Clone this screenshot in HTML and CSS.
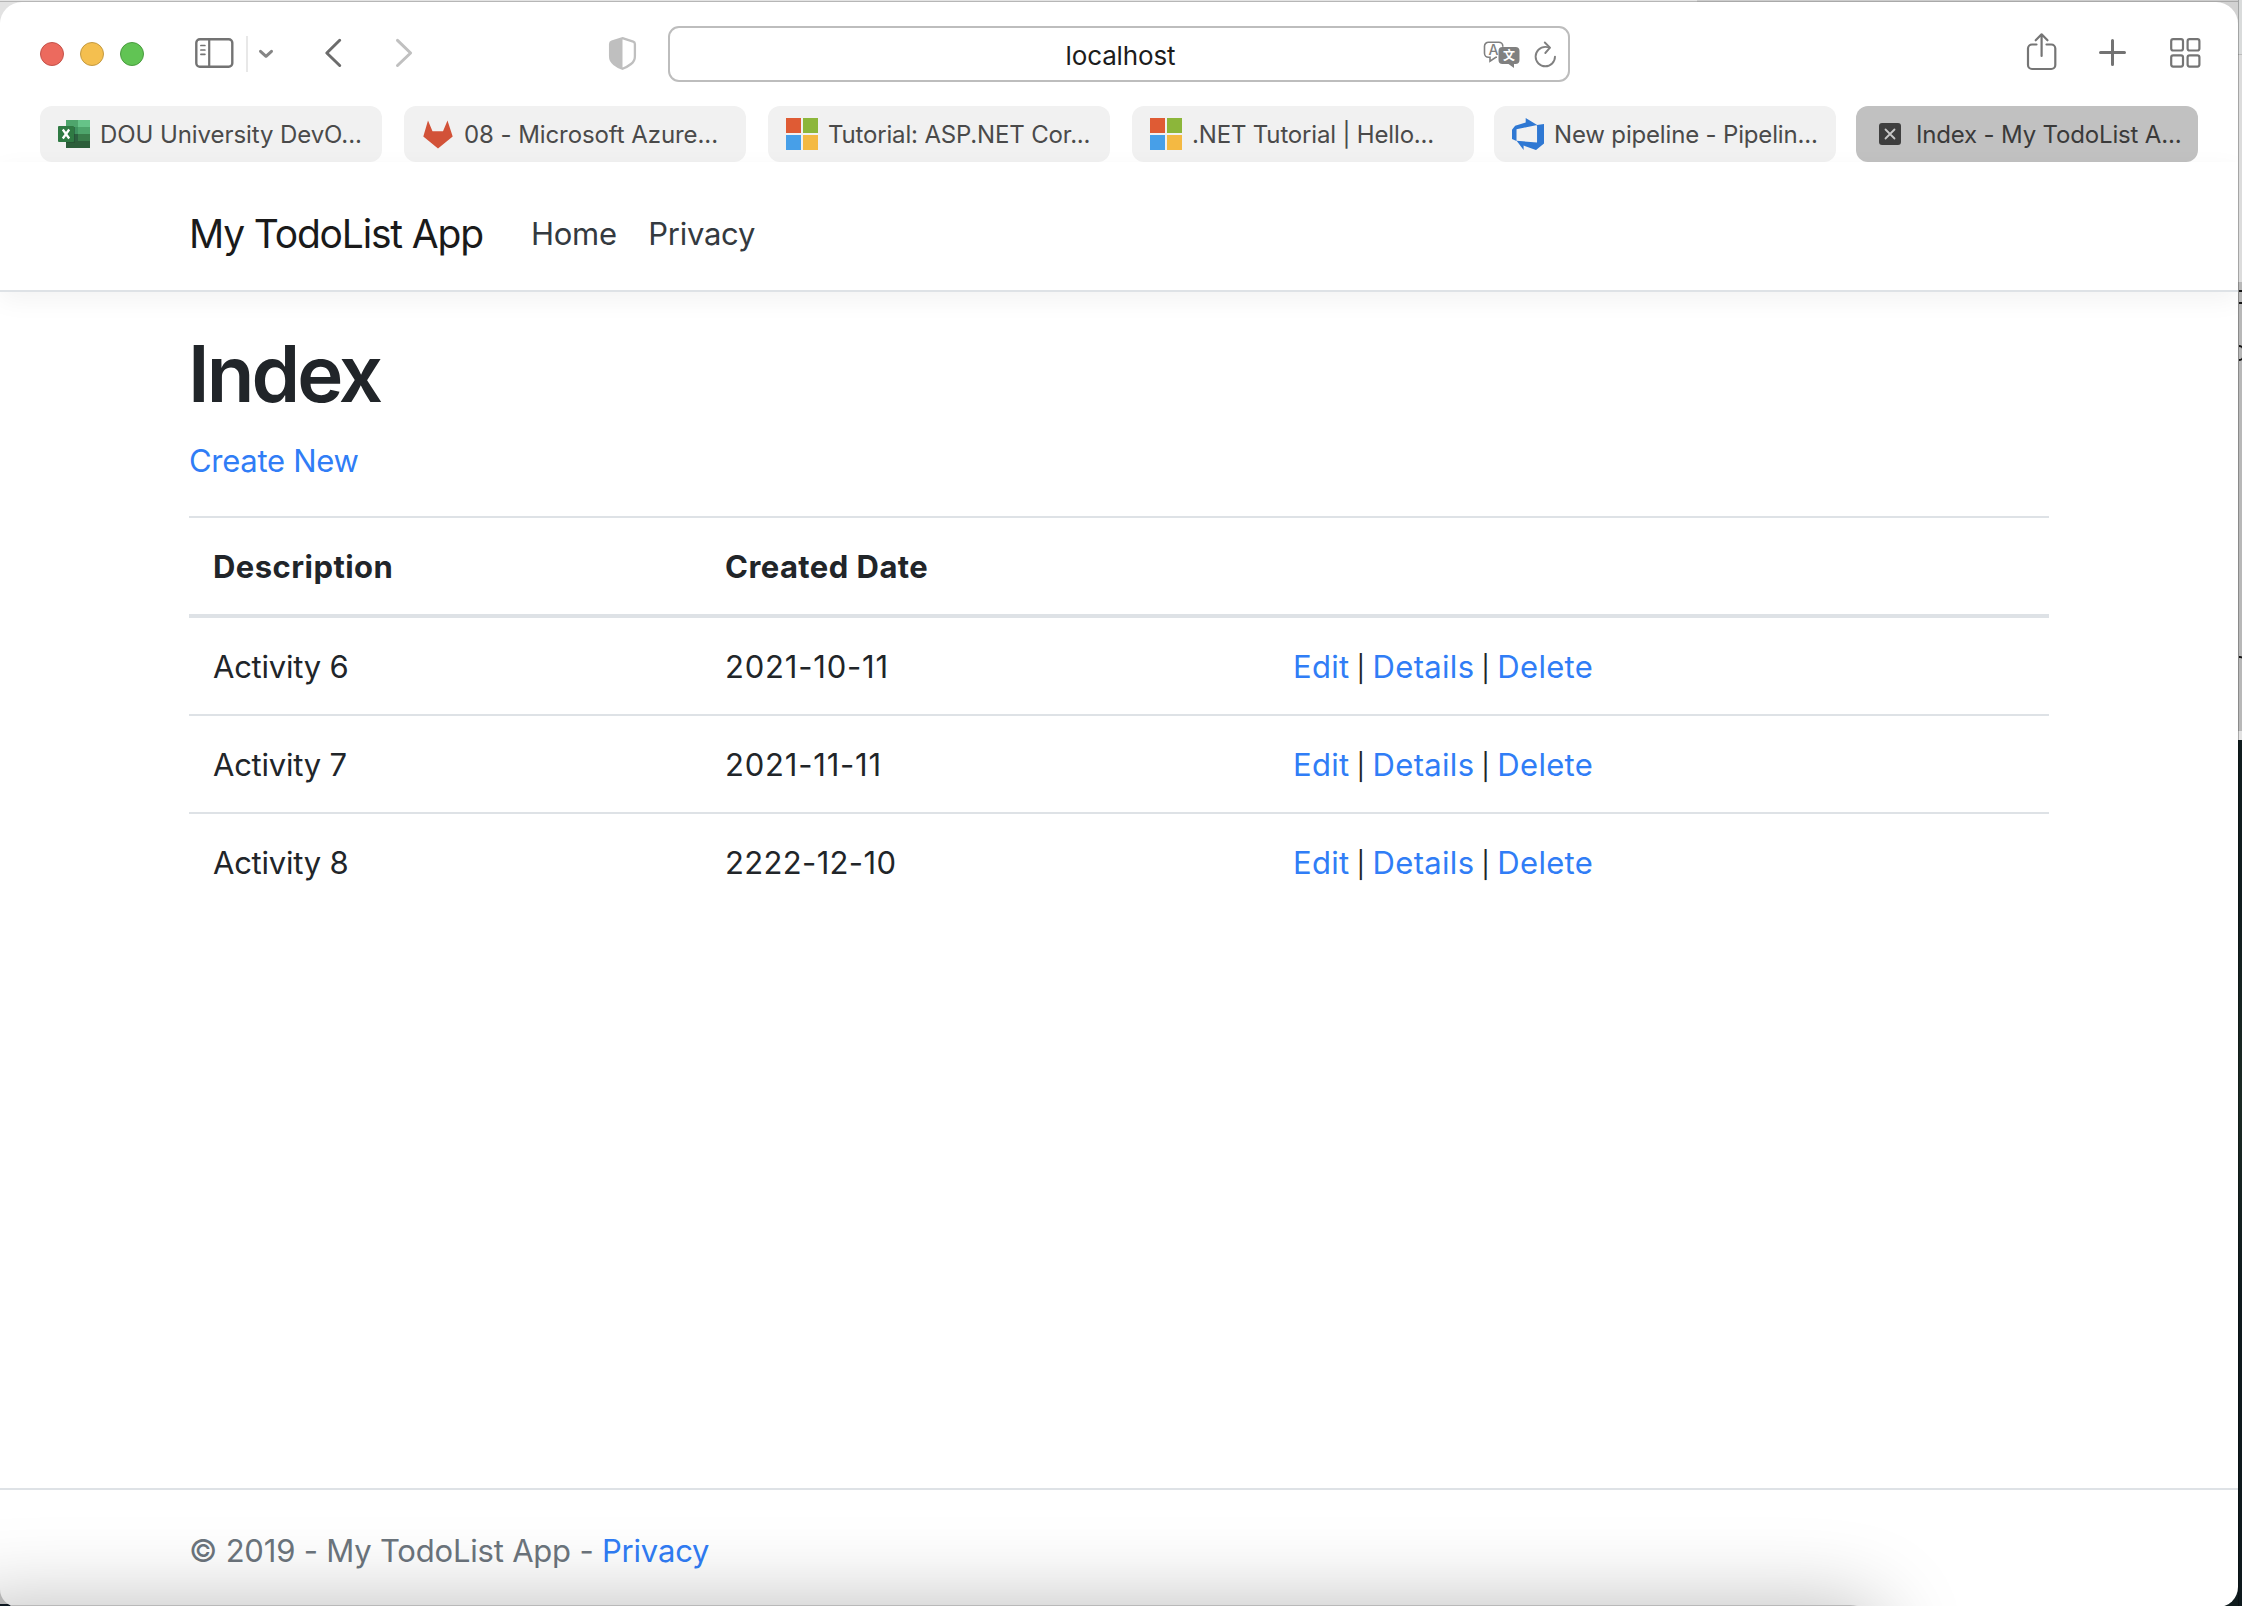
FILE: index.html
```
<!DOCTYPE html>
<html lang="en">
<head>
<meta charset="utf-8">
<title>Index - My TodoList App</title>
<link rel="stylesheet" href="styles.css">
</head>
<body>
<div class="window">
  <header class="toolbar">
    <div class="lights">
      <span class="light light-close"></span>
      <span class="light light-min"></span>
      <span class="light light-max"></span>
    </div>
    <svg class="icon sidebar-icon" width="40" height="40" viewBox="0 0 40 40" fill="none" stroke="#737373" stroke-width="2.4" stroke-linecap="round"><rect x="2.3" y="5.2" width="36" height="27.6" rx="3.6"/><path d="M15.2 5.500V32.500" stroke-width="2.200"/><path d="M6.900 11.500h4M6.900 16h4M6.900 20.300h4" stroke-width="1.700"/></svg>
    <span class="divider"></span>
    <svg class="icon chevron-icon" width="16" height="40" viewBox="0 0 16 40" fill="none" stroke="#858585" stroke-width="3" stroke-linecap="round" stroke-linejoin="round"><path d="M2.500 17.300L8 22.300L13.500 17.300"/></svg>
    <svg class="icon back-icon" width="20" height="40" viewBox="0 0 20 40" fill="none" stroke="#6c6c6c" stroke-width="3" stroke-linecap="round" stroke-linejoin="round"><path d="M15.700 6.300L2.800 19L15.700 31.500"/></svg>
    <svg class="icon forward-icon" width="20" height="40" viewBox="0 0 20 40" fill="none" stroke="#c0c0c0" stroke-width="3" stroke-linecap="round" stroke-linejoin="round"><path d="M3.500 6.300L16.600 19L3.500 31.500"/></svg>
    <svg class="icon shield-icon" width="32" height="40" viewBox="0 0 32 40"><path d="M16.500 4.200L27.200 7.600Q28.900 8.200 28.900 10V22.500Q28.900 27 25 30Q21.500 32.800 16.500 34.800Q11.500 32.800 8 30Q4.100 27 4.100 22.500V10Q4.100 8.200 5.800 7.600Z" fill="none" stroke="#bfbfbf" stroke-width="2.300"/><path d="M16.500 4.200V34.800Q11.500 32.800 8 30Q4.100 27 4.100 22.500V10Q4.100 8.200 5.800 7.600Z" fill="#bfbfbf"/></svg>
    <div class="url-bar">
      <span class="url-text">localhost</span>
      <div class="url-icons">
        <svg width="40" height="40" viewBox="0 0 40 40"><path d="M15 23.300h-1.200L8 27.200V23.300H6.500a4 4 0 0 1-4-4V12.200a4 4 0 0 1 4-4H16.800a4 4 0 0 1 4 4v.5" fill="none" stroke="#808080" stroke-width="1.600"/><path d="M20.500 13H33.500a4 4 0 0 1 4 4v9a4 4 0 0 1-4 4h-1.500V34L26.500 30H20.500a4 4 0 0 1-4-4V17a4 4 0 0 1 4-4Z" fill="#808080"/><text x="11.400" y="20.500" class="glyph-latin" text-anchor="middle">A</text><text x="27" y="26" class="glyph-han" text-anchor="middle">文</text></svg>
        <svg class="reload-icon" width="26" height="40" viewBox="0 0 26 40" fill="none" stroke="#808080" stroke-width="1.900" stroke-linecap="round" stroke-linejoin="round"><path d="M16.500 13.600Q14.500 12.900 12.300 12.900A9.700 9.700 0 1 0 22 22.600"/><path d="M11.800 8.500L17 13.700L12.300 19"/></svg>
      </div>
    </div>
    <svg class="icon share-icon" width="36" height="40" viewBox="0 0 36 40" fill="none" stroke="#757575" stroke-width="2.200" stroke-linecap="round" stroke-linejoin="round"><path d="M12.500 10.500H8a4 4 0 0 0-4 4V31a4 4 0 0 0 4 4H27.300a4 4 0 0 0 4-4V14.500a4 4 0 0 0-4-4H22.500"/><path d="M17.600 22V0.800M11.700 6.300L17.600 0.300L23.500 6.300"/></svg>
    <svg class="icon plus-icon" width="34" height="40" viewBox="0 0 34 40" fill="none" stroke="#737373" stroke-width="3" stroke-linecap="round"><path d="M16.500 6.500V30.500M4.500 18.500H28.500"/></svg>
    <svg class="icon grid-icon" width="34" height="40" viewBox="0 0 34 40" fill="none" stroke="#757575" stroke-width="2.200"><rect x="3.200" y="5.200" width="11.800" height="11.300" rx="2"/><rect x="19.600" y="5.200" width="11.800" height="11.300" rx="2"/><rect x="3.200" y="21.300" width="11.800" height="11.300" rx="2"/><rect x="19.600" y="21.300" width="11.800" height="11.300" rx="2"/></svg>
  </header>

  <nav class="tabs">
    <div class="tab">
      <svg width="32" height="32" viewBox="0 0 32 32"><path d="M8 2h12v7H8z" fill="#4ea56c"/><path d="M20 2h12v7H20z" fill="#66c388"/><path d="M8 9h12v7H8z" fill="#3f9360"/><path d="M20 9h12v7H20z" fill="#4ea56c"/><path d="M8 16h12v7H8z" fill="#2c6040"/><path d="M20 16h12v7H20z" fill="#397d4b"/><path d="M8 23h24v7H8z" fill="#2c5e3a"/><path d="M8 9h9v16H8z" fill="#1f4a2e" opacity=".5"/><rect y="8" width="16" height="16" rx="1" fill="#2f7a43"/><path d="M4.800 11.500L11.200 20.500M11.200 11.500L4.800 20.500" stroke="#fff" stroke-width="2.300"/></svg>
      <span class="tab-title">DOU University DevO...</span>
    </div>
    <div class="tab">
      <svg width="32" height="32" viewBox="0 0 32 32"><path d="M1.300 18.500L6 2.500L10.500 13.200H21L25.500 2.500L30.700 18.500L16 30.500Z" fill="#d25238"/></svg>
      <span class="tab-title">08 - Microsoft Azure...</span>
    </div>
    <div class="tab">
      <svg width="32" height="32" viewBox="0 0 32 32"><path d="M0 0h15v15H0z" fill="#df5b34"/><path d="M17 0h15v15H17z" fill="#8cb63a"/><path d="M0 17h15v15H0z" fill="#479fe8"/><path d="M17 17h15v15H17z" fill="#f4b942"/></svg>
      <span class="tab-title tab-title-tight">Tutorial: ASP.NET Cor...</span>
    </div>
    <div class="tab">
      <svg width="32" height="32" viewBox="0 0 32 32"><path d="M0 0h15v15H0z" fill="#df5b34"/><path d="M17 0h15v15H17z" fill="#8cb63a"/><path d="M0 17h15v15H0z" fill="#479fe8"/><path d="M17 17h15v15H17z" fill="#f4b942"/></svg>
      <span class="tab-title tab-title-tight">.NET Tutorial | Hello...</span>
    </div>
    <div class="tab">
      <svg width="32" height="32" viewBox="1 1 16 16"><path d="M17 4v9.740l-4 3.280-6.200-2.260V17l-3.510-4.590 10.230.8V4.440zm-3.410.490L7.850 1v2.290L2.580 4.840 1 6.870v4.610l2.260 1V6.570z" fill="#2f78d3"/></svg>
      <span class="tab-title tab-title-tight">New pipeline - Pipelin...</span>
    </div>
    <div class="tab tab-active">
      <svg width="22" height="22" viewBox="0 0 22 22"><rect width="22" height="22" rx="3" fill="#3f3f3f"/><path d="M6.500 6.500l9 9M15.500 6.500l-9 9" stroke="#c8c8c8" stroke-width="1.800" stroke-linecap="round"/></svg>
      <span class="tab-title tab-title-tight">Index - My TodoList A...</span>
    </div>
  </nav>

  <div class="navbar">
    <a class="brand">My TodoList App</a>
    <a class="nav-link">Home</a>
    <a class="nav-link">Privacy</a>
  </div>

  <main class="content">
    <h1>Index</h1>
    <p class="create"><a class="link">Create New</a></p>
    <div class="table">
      <div class="row row-head"><span>Description</span><span>Created Date</span><span></span></div>
      <div class="row"><span>Activity 6</span><span class="date">2021-10-11</span><span class="actions"><a class="link">Edit</a><i class="bar">|</i><a class="link">Details</a><i class="bar">|</i><a class="link">Delete</a></span></div>
      <div class="row"><span>Activity 7</span><span class="date">2021-11-11</span><span class="actions"><a class="link">Edit</a><i class="bar">|</i><a class="link">Details</a><i class="bar">|</i><a class="link">Delete</a></span></div>
      <div class="row"><span>Activity 8</span><span class="date date-wide">2222-12-10</span><span class="actions"><a class="link">Edit</a><i class="bar">|</i><a class="link">Details</a><i class="bar">|</i><a class="link">Delete</a></span></div>
    </div>
  </main>

  <footer class="footer">© 2019 - My TodoList App - <a class="link">Privacy</a></footer>
  <div class="shade"><div class="shade-caster"></div></div>
</div>
<aside class="behind">
  <span class="mark mark-a"></span>
  <span class="mark mark-b"></span>
  <span class="mark mark-c"></span>
</aside>
</body>
</html>
```
FILE: styles.css
```
* { box-sizing: border-box; }

body {
  margin: 0;
  width: 2242px;
  height: 1606px;
  overflow: hidden;
  display: flex;
  font-family: Inter, "Liberation Sans", sans-serif;
  font-size: 31px;
  line-height: 48px;
  color: #212529;
  background:
    linear-gradient(#0c1720, #0c1720) 0 1604px / 60px 2px no-repeat,
    linear-gradient(#b4b4b4, #b4b4b4) 0 1560px / 60px 44px no-repeat,
    linear-gradient(to bottom, #e4e4e4 0 1px, #b6b6b6 1px 2px, #e2e2e2 2px) 0 0 / 1697px 40px no-repeat,
    linear-gradient(to bottom, #cdcdcd 0 1px, #a9a9a9 1px 2px, #d2d2d2 2px) 1697px 0 / 541px 40px no-repeat,
    #101c1e;
}

.window {
  position: relative;
  flex: none;
  width: 2238px;
  height: 1605px;
  margin-top: 2px;
  display: flex;
  flex-direction: column;
  overflow: hidden;
  background: #fff;
  border-radius: 22px 22px 20px 18px;
}

/* Slice of the desktop visible to the right of the window */
.behind {
  flex: none;
  width: 4px;
  height: 1606px;
  overflow: hidden;
  padding-top: 290px;
  border-left: 1px solid rgba(0, 0, 0, .25);
  background: linear-gradient(to bottom, #d9dbdb 0 54px, #bcbcbc 54px 55px, #dcdcdc 55px 282px, #b8b8b8 282px 731px, #e2e2e2 731px 740px, #101c1e 740px 900px, #1b2a24 1100px, #0e191d 1300px);
}
.mark { display: block; width: 4px; }
.mark-a { height: 14px; border: solid #151515; border-width: 2px 0 2px 0; }
.mark-b { height: 16px; margin-top: 41px; border: solid #151515; border-width: 2px 1px 2px 0; border-radius: 0 6px 6px 0; }
.mark-c { height: 12px; margin-top: 295px; border: solid #151515; border-width: 2px 1px 0 0; border-radius: 0 3px 0 0; }

.toolbar {
  flex: none;
  height: 104px;
  display: flex;
  align-items: center;
  padding-left: 40px;
}
.toolbar .icon { flex: none; overflow: visible; }
.lights { display: flex; gap: 16px; }
.light { width: 24px; height: 24px; border-radius: 50%; border: 1px solid; }
.light-close { background: #ec6a5e; border-color: #c4524a; }
.light-min { background: #f4bf4f; border-color: #c49a41; }
.light-max { background: #61c454; border-color: #4a9c3f; }
.sidebar-icon { margin-left: 50px; }
.divider { width: 2px; height: 36px; margin-left: 12px; background: #e8e8e8; }
.chevron-icon { margin-left: 10px; }
.back-icon { margin-left: 50px; }
.forward-icon { margin-left: 50px; }
.shield-icon { margin-left: 192px; }
.share-icon { margin-left: 454px; }
.plus-icon { margin-left: 36px; }
.grid-icon { margin-left: 38px; }

.url-bar {
  flex: none;
  width: 902px;
  height: 56px;
  margin-left: 30px;
  display: grid;
  grid-template-columns: 1fr auto 1fr;
  align-items: center;
  border: 2px solid #bdbdbd;
  border-radius: 11px;
}
.url-text { grid-column: 2; padding: 4px 0 0 3px; font-size: 26px; line-height: 48px; letter-spacing: -.13px; color: #1c1c1c; }
.url-icons { display: flex; justify-content: flex-end; gap: 11px; padding-right: 9px; }
.glyph-latin { font: 500 14px Inter, sans-serif; fill: #808080; }
.glyph-han { font: 700 12px "Noto Sans CJK SC", sans-serif; fill: #fff; }

.tabs { flex: none; display: flex; gap: 22px; padding-left: 40px; }
.tab {
  flex: none;
  width: 342px;
  height: 56px;
  display: flex;
  align-items: center;
  gap: 10px;
  padding-left: 18px;
  border-radius: 12px;
  background: #f1f1f1;
  color: #4a4a4a;
}
.tab svg { flex: none; }
.tab:nth-child(n+5) { margin-left: -2px; }
.tab-title { padding-top: 2px; font-size: 24px; line-height: 40px; letter-spacing: -.08px; white-space: nowrap; }
.tab-title-tight { letter-spacing: -.17px; }
.tab-active { gap: 15px; padding-left: 23px; background: #c1c1c1; color: #3a3a3a; }

.navbar {
  flex: none;
  height: 130px;
  display: flex;
  align-items: center;
  padding: 16px 0 0 189px;
  border-bottom: 2px solid #dee2e6;
  box-shadow: 0 8px 24px rgba(0, 0, 0, .05);
}
.brand { margin-right: 32px; font-size: 39px; line-height: 60px; letter-spacing: -1.180px; color: #1a1a1a; }
.nav-link { padding: 0 15.500px 0 16px; letter-spacing: -.25px; color: #343a40; }

.content { flex: 1; width: 1860px; margin: 32px auto 0 189px; }
h1 { margin: 0 0 16px -1px; padding-top: 2px; height: 96px; font-size: 78px; line-height: 96px; font-weight: 560; letter-spacing: -2.900px; }
.create { height: 48px; margin: 0 0 32px; padding-top: 1px; letter-spacing: -.28px; }
.link { color: #307df6; }
.row {
  display: grid;
  grid-template-columns: 512px 567px 781px;
  height: 98px;
  padding-top: 25px;
  border-top: 2px solid #dee2e6;
  letter-spacing: -.24px;
}
.row > span { padding-left: 24px; }
.row-head { border-bottom: 4px solid #dee2e6; height: 102px; padding-top: 25px; font-weight: 700; letter-spacing: .45px; }
.row-head + .row { border-top: 0; height: 96px; }
.row .date { letter-spacing: .8px; }
.row .date-wide { letter-spacing: .35px; }
.row .actions { display: flex; align-items: baseline; padding-left: 25px; letter-spacing: .32px; }
.bar { width: 23px; text-align: center; font-size: 26px; font-style: normal; }

.footer {
  flex: none;
  height: 119px;
  padding: 37px 0 0 189px;
  border-top: 2px solid #dee2e6;
  color: #6c757d;
  letter-spacing: -.2px;
}

/* Soft shadow cast over the bottom edge of the window */
.shade { position: absolute; left: 0; bottom: 0; width: 2238px; height: 100px; overflow: hidden; pointer-events: none; }
.shade-caster {
  width: 1930px;
  height: 200px;
  margin: 98px 0 0 -50px;
  border-top: 1px solid #b9b9b9;
  border-radius: 30px;
  box-shadow: 0 0 84px rgba(0, 0, 0, .27);
}
```
